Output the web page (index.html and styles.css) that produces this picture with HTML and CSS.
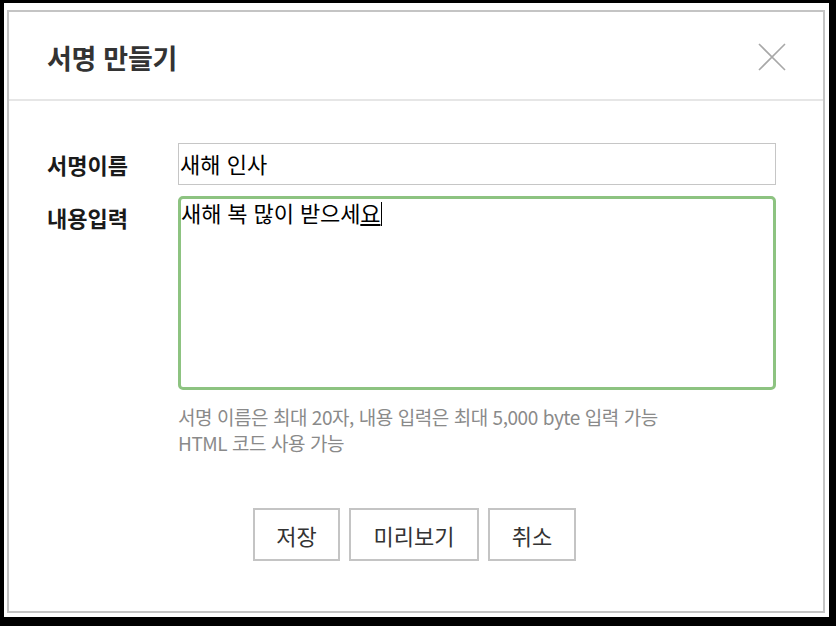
FILE: index.html
```html
<!DOCTYPE html>
<html lang="ko">
<head>
<meta charset="utf-8">
<title>서명 만들기</title>
<link rel="stylesheet" href="styles.css">
</head>
<body>
<div class="frame">
  <div class="dialog">
    <div class="header">
      <h1 class="title">서명 만들기</h1>
      <button class="close" aria-label="닫기">
        <svg width="28" height="28" viewBox="0 0 28 28"><path d="M1 1 L27 27 M27 1 L1 27" stroke="#a8a8a8" stroke-width="1.6" fill="none"/></svg>
      </button>
    </div>
    <div class="body">
      <div class="form">
        <label class="label">서명이름</label>
        <div class="input">새해 인사</div>
        <label class="label">내용입력</label>
        <div class="textarea">새해 복 많이 받으세<span class="ime">요</span><span class="caret"></span></div>
        <div></div>
        <p class="help">서명 이름은 최대 20자, 내용 입력은 최대 5,000 byte 입력 가능<br>HTML 코드 사용 가능</p>
      </div>
      <div class="buttons">
        <button class="btn btn-save">저장</button>
        <button class="btn btn-preview">미리보기</button>
        <button class="btn btn-cancel">취소</button>
      </div>
    </div>
  </div>
</div>
</body>
</html>
```
FILE: styles.css
```css
* { box-sizing: border-box; }
html, body { margin: 0; padding: 0; }
body {
  background: #000;
  width: 836px;
  height: 626px;
  overflow: hidden;
  font-family: "Noto Sans CJK KR", "Noto Sans", sans-serif;
}
.frame {
  margin: 3px 7px 0 4px;
  width: 825px;
  height: 614px;
  background: #fff;
  padding: 7px 4px 4px 3px;
}
.dialog {
  width: 818px;
  height: 603px;
  border: 2px solid #c4c4c4;
  background: #fff;
  display: flex;
  flex-direction: column;
}
.header {
  height: 89px;
  border-bottom: 2px solid #e6e6e6;
  display: flex;
  align-items: center;
  justify-content: space-between;
  padding: 3px 37px 0 38px;
}
.title {
  margin: 0;
  font-size: 27px;
  font-weight: 700;
  color: #333;
  letter-spacing: -0.3px;
}
.close {
  border: 0;
  background: none;
  padding: 0;
  width: 28px;
  height: 28px;
  display: block;
}
.close svg { display: block; }
.body {
  padding: 42px 0 0 38px;
}
.form {
  display: grid;
  grid-template-columns: 131px 598px;
  row-gap: 11px;
  align-items: start;
}
.label {
  font-size: 22px;
  font-weight: 700;
  color: #1a1a1a;
  line-height: 42px;
}
.input {
  height: 42px;
  border: 1.5px solid #c6c6c6;
  border-right-width: 1px;
  font-size: 22px;
  line-height: 38px;
  color: #000;
  padding-left: 1px;
}
.textarea {
  height: 194px;
  border: 3px solid #8dc381;
  border-radius: 5px;
  font-size: 22px;
  line-height: 27px;
  color: #000;
  padding: 0;
  letter-spacing: -0.1px;
}
.ime {
  text-decoration: underline;
  text-decoration-thickness: 2px;
  text-underline-offset: 2px;
}
.caret {
  display: inline-block;
  width: 1px;
  height: 24px;
  background: #000;
  vertical-align: -4px;
  margin-left: 1px;
}
.help {
  margin: 0;
  padding-top: 3px;
  font-size: 19px;
  line-height: 26px;
  color: #8a8a8a;
  letter-spacing: -0.45px;
}
.buttons {
  display: flex;
  justify-content: center;
  gap: 9px;
  margin-top: 52px;
  padding-right: 41px;
}
.btn {
  height: 53px;
  border: 2px solid #c4c4c4;
  background: #fff;
  font-family: "Noto Sans CJK KR", "Noto Sans", sans-serif;
  font-size: 22px;
  color: #333;
  padding: 0;
}
.btn-save { width: 87px; }
.btn-preview { width: 130px; }
.btn-cancel { width: 88px; }
```
